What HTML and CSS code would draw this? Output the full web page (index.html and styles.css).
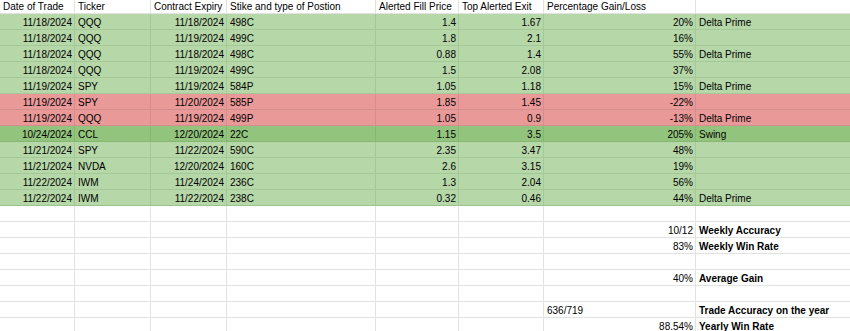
FILE: index.html
```html
<!DOCTYPE html>
<html>
<head>
<meta charset="utf-8">
<link rel="stylesheet" href="styles.css">
</head>
<body>
<div class="sheet">
  <div class="row head">
    <div class="c">Date of Trade</div><div class="c">Ticker</div><div class="c">Contract Expiry</div><div class="c">Stike and type of Postion</div><div class="c">Alerted Fill Price</div><div class="c">Top Alerted Exit</div><div class="c">Percentage Gain/Loss</div><div class="c"></div>
  </div>
  <div class="row green">
    <div class="c r">11/18/2024</div><div class="c">QQQ</div><div class="c r">11/18/2024</div><div class="c">498C</div><div class="c r">1.4</div><div class="c r">1.67</div><div class="c r">20%</div><div class="c">Delta Prime</div>
  </div>
  <div class="row green">
    <div class="c r">11/18/2024</div><div class="c">QQQ</div><div class="c r">11/19/2024</div><div class="c">499C</div><div class="c r">1.8</div><div class="c r">2.1</div><div class="c r">16%</div><div class="c"></div>
  </div>
  <div class="row green">
    <div class="c r">11/18/2024</div><div class="c">QQQ</div><div class="c r">11/18/2024</div><div class="c">498C</div><div class="c r">0.88</div><div class="c r">1.4</div><div class="c r">55%</div><div class="c">Delta Prime</div>
  </div>
  <div class="row green">
    <div class="c r">11/18/2024</div><div class="c">QQQ</div><div class="c r">11/19/2024</div><div class="c">499C</div><div class="c r">1.5</div><div class="c r">2.08</div><div class="c r">37%</div><div class="c"></div>
  </div>
  <div class="row green">
    <div class="c r">11/19/2024</div><div class="c">SPY</div><div class="c r">11/19/2024</div><div class="c">584P</div><div class="c r">1.05</div><div class="c r">1.18</div><div class="c r">15%</div><div class="c">Delta Prime</div>
  </div>
  <div class="row red">
    <div class="c r">11/19/2024</div><div class="c">SPY</div><div class="c r">11/20/2024</div><div class="c">585P</div><div class="c r">1.85</div><div class="c r">1.45</div><div class="c r">-22%</div><div class="c"></div>
  </div>
  <div class="row red">
    <div class="c r">11/19/2024</div><div class="c">QQQ</div><div class="c r">11/19/2024</div><div class="c">499P</div><div class="c r">1.05</div><div class="c r">0.9</div><div class="c r">-13%</div><div class="c">Delta Prime</div>
  </div>
  <div class="row dark">
    <div class="c r">10/24/2024</div><div class="c">CCL</div><div class="c r">12/20/2024</div><div class="c">22C</div><div class="c r">1.15</div><div class="c r">3.5</div><div class="c r">205%</div><div class="c">Swing</div>
  </div>
  <div class="row green">
    <div class="c r">11/21/2024</div><div class="c">SPY</div><div class="c r">11/22/2024</div><div class="c">590C</div><div class="c r">2.35</div><div class="c r">3.47</div><div class="c r">48%</div><div class="c"></div>
  </div>
  <div class="row green">
    <div class="c r">11/21/2024</div><div class="c">NVDA</div><div class="c r">12/20/2024</div><div class="c">160C</div><div class="c r">2.6</div><div class="c r">3.15</div><div class="c r">19%</div><div class="c"></div>
  </div>
  <div class="row green">
    <div class="c r">11/22/2024</div><div class="c">IWM</div><div class="c r">11/24/2024</div><div class="c">236C</div><div class="c r">1.3</div><div class="c r">2.04</div><div class="c r">56%</div><div class="c"></div>
  </div>
  <div class="row green last">
    <div class="c r">11/22/2024</div><div class="c">IWM</div><div class="c r">11/22/2024</div><div class="c">238C</div><div class="c r">0.32</div><div class="c r">0.46</div><div class="c r">44%</div><div class="c">Delta Prime</div>
  </div>
  <div class="row">
    <div class="c"></div><div class="c"></div><div class="c"></div><div class="c"></div><div class="c"></div><div class="c"></div><div class="c"></div><div class="c"></div>
  </div>
  <div class="row">
    <div class="c"></div><div class="c"></div><div class="c"></div><div class="c"></div><div class="c"></div><div class="c"></div><div class="c r">10/12</div><div class="c b">Weekly Accuracy</div>
  </div>
  <div class="row">
    <div class="c"></div><div class="c"></div><div class="c"></div><div class="c"></div><div class="c"></div><div class="c"></div><div class="c r">83%</div><div class="c b">Weekly Win Rate</div>
  </div>
  <div class="row">
    <div class="c"></div><div class="c"></div><div class="c"></div><div class="c"></div><div class="c"></div><div class="c"></div><div class="c"></div><div class="c"></div>
  </div>
  <div class="row">
    <div class="c"></div><div class="c"></div><div class="c"></div><div class="c"></div><div class="c"></div><div class="c"></div><div class="c r">40%</div><div class="c b">Average Gain</div>
  </div>
  <div class="row">
    <div class="c"></div><div class="c"></div><div class="c"></div><div class="c"></div><div class="c"></div><div class="c"></div><div class="c"></div><div class="c"></div>
  </div>
  <div class="row">
    <div class="c"></div><div class="c"></div><div class="c"></div><div class="c"></div><div class="c"></div><div class="c"></div><div class="c">636/719</div><div class="c b">Trade Accuracy on the year</div>
  </div>
  <div class="row">
    <div class="c"></div><div class="c"></div><div class="c"></div><div class="c"></div><div class="c"></div><div class="c"></div><div class="c r">88.54%</div><div class="c b">Yearly Win Rate</div>
  </div>
</div>
</body>
</html>
```
FILE: styles.css
```css
html, body {
  margin: 0;
  padding: 0;
  background: #ffffff;
  overflow: hidden;
}

.sheet {
  display: grid;
  grid-template-columns: 75px 76px 76px 149px 83px 85px 152px 154px;
  grid-template-rows: 14px;
  grid-auto-rows: 16px;
  width: 850px;
  font-family: "Liberation Sans", Arial, sans-serif;
  font-size: 10px;
  color: #000000;
}

.row {
  display: contents;
}

.c {
  box-sizing: border-box;
  display: flex;
  align-items: flex-end;
  justify-content: flex-start;
  padding: 0 2px 0 3px;
  line-height: 12px;
  white-space: nowrap;
  border-right: 1px solid #e2e2e2;
  border-bottom: 1px solid #e2e2e2;
  background: #ffffff;
  min-width: 0;
}

.c:nth-child(8) {
  border-right: none;
}

.r {
  justify-content: flex-end;
}

.b {
  font-weight: bold;
}

.green .c {
  background: #b6d7a8;
  border-color: #a6c898;
}

.red .c {
  background: #ea9999;
  border-color: #d58d8d;
}

.dark .c {
  background: #93c47d;
  border-color: #86b772;
}

.last .c {
  border-bottom-color: #9cc18c;
}
```
